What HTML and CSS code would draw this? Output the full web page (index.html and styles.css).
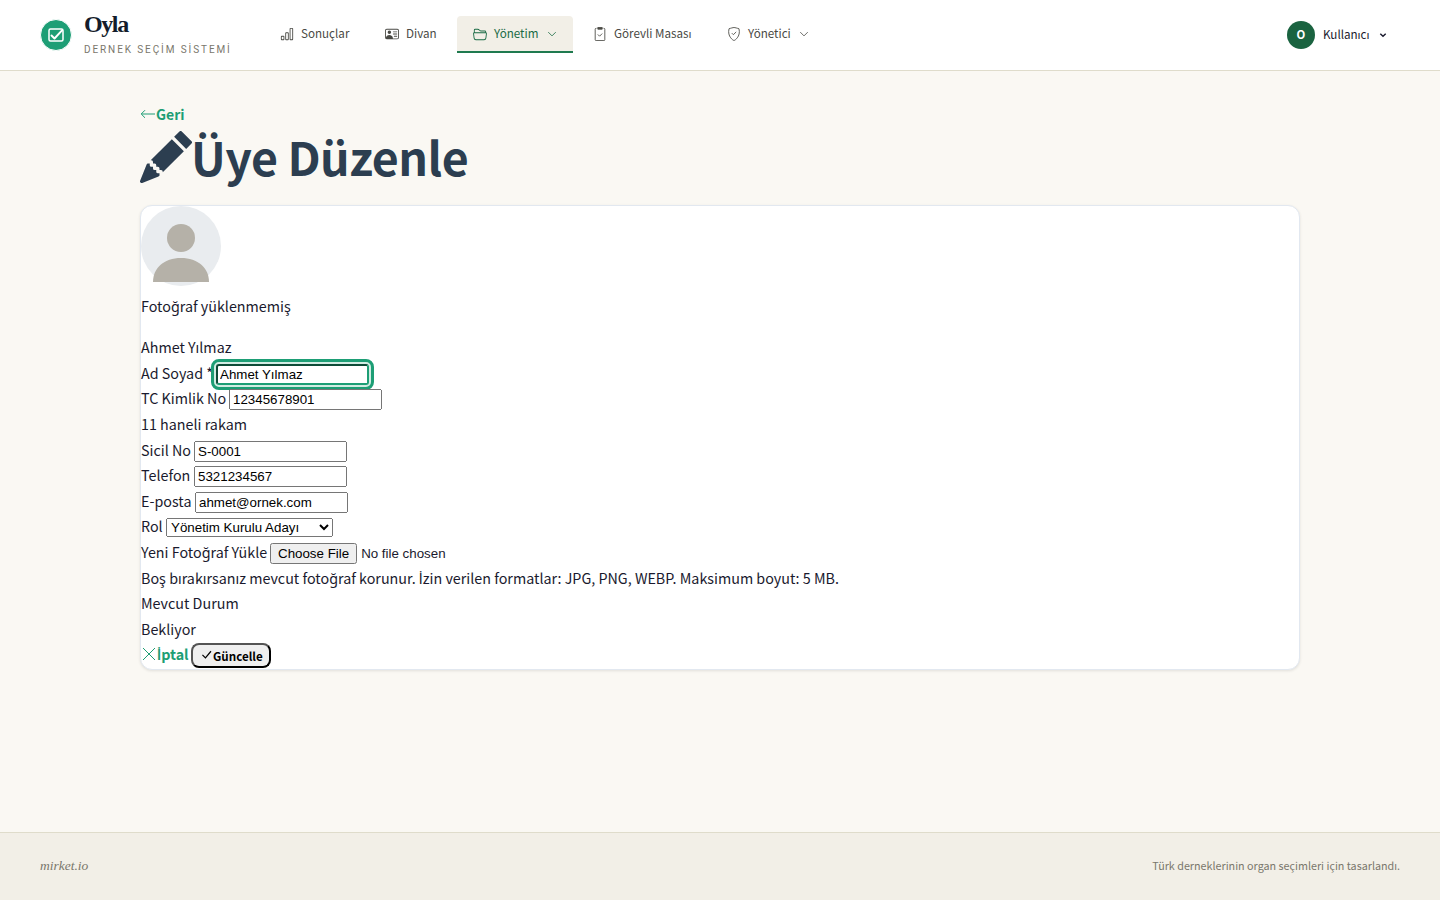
FILE: index.html
```html
<!DOCTYPE html>
<html lang="tr">
<head>
<meta charset="UTF-8" />
<meta name="viewport" content="width=device-width, initial-scale=1.0" />
<title>Üye Düzenle - Oyla</title>
<link rel="stylesheet" href="styles.css">
</head>
<body>
<header class="topbar">
  <a class="brand" href="#">
    <span class="brand-mark">
      <svg width="18" height="18" viewBox="0 0 18 18" fill="none" stroke="#fff" stroke-width="1.5" stroke-linecap="round" stroke-linejoin="round">
        <rect x="2" y="3" width="14" height="12" rx="1.5"/>
        <path d="M4.5 9.5l3 3L15 4.3" stroke-width="1.9"/>
      </svg>
    </span>
    <span class="brand-text">
      <span class="brand-name">Oyla</span>
      <span class="brand-sub">DERNEK SEÇİM SİSTEMİ</span>
    </span>
  </a>
  <nav class="nav">
    <a class="nav-item w-sonuclar" href="#">
      <svg class="icon" viewBox="0 0 16 16"><path d="M4 11H2v3h2zm5-4H7v7h2zm5-5v12h-2V2zm-2-1a1 1 0 0 0-1 1v12a1 1 0 0 0 1 1h2a1 1 0 0 0 1-1V2a1 1 0 0 0-1-1zM6 7a1 1 0 0 1 1-1h2a1 1 0 0 1 1 1v7a1 1 0 0 1-1 1H7a1 1 0 0 1-1-1zm-5 4a1 1 0 0 1 1-1h2a1 1 0 0 1 1 1v3a1 1 0 0 1-1 1H2a1 1 0 0 1-1-1z"/></svg>
      <span>Sonuçlar</span>
    </a>
    <a class="nav-item w-divan" href="#">
      <svg class="icon" viewBox="0 0 16 16"><path d="M5 8a2 2 0 1 0 0-4 2 2 0 0 0 0 4m4-2.500a.5.5 0 0 1 .5-.5h4a.5.5 0 0 1 0 1h-4a.5.5 0 0 1-.5-.5M9 8a.5.5 0 0 1 .5-.5h4a.5.5 0 0 1 0 1h-4A.5.5 0 0 1 9 8m1 2.500a.5.5 0 0 1 .5-.5h3a.5.5 0 0 1 0 1h-3a.5.5 0 0 1-.5-.5"/><path d="M2 2a2 2 0 0 0-2 2v8a2 2 0 0 0 2 2h12a2 2 0 0 0 2-2V4a2 2 0 0 0-2-2zM1 4a1 1 0 0 1 1-1h12a1 1 0 0 1 1 1v8a1 1 0 0 1-1 1H8.960q.04-.245.04-.5C9 10.567 7.210 9 5 9c-2.086 0-3.800 1.398-3.984 3.181A1 1 0 0 1 1 12z"/></svg>
      <span>Divan</span>
    </a>
    <a class="nav-item w-yonetim active" href="#">
      <svg class="icon" viewBox="0 0 16 16"><path d="M1 3.500A1.500 1.500 0 0 1 2.500 2h2.764c.958 0 1.760.56 2.311 1.184C7.985 3.648 8.480 4 9 4h4.500A1.500 1.500 0 0 1 15 5.500v.64c.57.265.94.876.856 1.546l-.64 5.124A2.500 2.500 0 0 1 12.733 15H3.266a2.500 2.500 0 0 1-2.481-2.190l-.64-5.124A1.500 1.500 0 0 1 1 6.140zM2 6h12v-.5a.5.5 0 0 0-.5-.5H9c-.964 0-1.710-.629-2.174-1.154C6.374 3.334 5.820 3 5.264 3H2.500a.5.5 0 0 0-.5.5zm-.367 1a.5.5 0 0 0-.496.562l.64 5.124A1.500 1.500 0 0 0 3.266 14h9.468a1.500 1.500 0 0 0 1.489-1.314l.64-5.124A.5.5 0 0 0 14.367 7z"/></svg>
      <span>Yönetim</span>
      <svg class="chevron" viewBox="0 0 16 16"><path d="M2 5l6 6 6-6"/></svg>
    </a>
    <a class="nav-item w-gorevli" href="#">
      <svg class="icon line" viewBox="0 0 16 16"><path d="M4 1.500h-.5a1 1 0 0 0-1 1v12a1 1 0 0 0 1 1h9a1 1 0 0 0 1-1v-12a1 1 0 0 0-1-1H12M5.500 8.500L7.500 10.500l3-3"/><path class="solid" d="M5.500.5h5v2h-5z"/></svg>
      <span>Görevli Masası</span>
    </a>
    <a class="nav-item w-yonetici" href="#">
      <svg class="icon line" viewBox="0 0 16 16"><path d="M8 .6C6.900.6 4.200 1.400 2.300 2 1.200 6.500 2.400 10 4.200 12.300 5.400 13.900 7.200 15.400 8 15.400s2.600-1.500 3.800-3.100C13.600 10 14.800 6.500 13.700 2 11.800 1.400 9.100.6 8 .6zM5.500 7L7.300 8.800l3.200-3.200"/></svg>
      <span>Yönetici</span>
      <svg class="chevron" viewBox="0 0 16 16"><path d="M2 5l6 6 6-6"/></svg>
    </a>
  </nav>
  <div class="user">
    <span class="user-avatar">O</span>
    <span class="user-name">Kullanıcı</span>
    <svg class="user-caret" viewBox="0 0 8 8"><path d="M1.300 2.700L4 5.300l2.700-2.600"/></svg>
  </div>
</header>

<main class="container">
  <a class="link back" href="#">
    <svg width="16" height="16" viewBox="0 0 16 16"><path d="M15 8H1.500M5 4.200L1.200 8 5 11.800"/></svg><span>Geri</span>
  </a>
  <h1>
    <svg width="52" height="52" viewBox="0 0 16 16"><path d="M12.854.146a.5.5 0 0 0-.707 0L10.500 1.793 14.207 5.500l1.647-1.646a.5.5 0 0 0 0-.708zm.646 6.061L9.793 2.500 3.293 9H3.500a.5.5 0 0 1 .5.5v.5h.5a.5.5 0 0 1 .5.5v.5h.5a.5.5 0 0 1 .5.5v.5h.5a.5.5 0 0 1 .5.5v.207zm-7.468 7.468A.5.5 0 0 1 6 13.500V13h-.5a.5.5 0 0 1-.5-.5V12h-.5a.5.5 0 0 1-.5-.5V11h-.5a.5.5 0 0 1-.5-.5V10h-.5a.5.5 0 0 1-.175-.032l-.179.178a.5.5 0 0 0-.11.168l-2 5a.5.5 0 0 0 .65.65l5-2a.5.5 0 0 0 .168-.11z"/></svg><span>Üye Düzenle</span>
  </h1>

  <form class="card">
    <svg class="photo" width="80" height="80" viewBox="0 0 80 80">
      <circle cx="40" cy="40" r="40" fill="#e9ecef"/>
      <circle cx="40" cy="32" r="14" fill="#b5b1a8"/>
      <path d="M12 76c0-14 11-24 28-24s28 10 28 24z" fill="#b5b1a8"/>
    </svg>
    <p class="photo-note"><span>Fotoğraf yüklenmemiş</span></p>
    <div class="row"><span>Ahmet Yılmaz</span></div>
    <div class="row"><label for="ad" class="l-ad">Ad Soyad *</label><input id="ad" class="focused" type="text" value="Ahmet Yılmaz"></div>
    <div class="row"><label for="tc" class="l-tc">TC Kimlik No</label><input id="tc" type="text" value="12345678901"></div>
    <div class="row"><span>11 haneli rakam</span></div>
    <div class="row"><label for="sicil" class="l-sicil">Sicil No</label><input id="sicil" type="text" value="S-0001"></div>
    <div class="row"><label for="tel" class="l-tel">Telefon</label><input id="tel" type="text" value="5321234567"></div>
    <div class="row"><label for="mail" class="l-mail">E-posta</label><input id="mail" type="email" value="ahmet@ornek.com"></div>
    <div class="row"><label for="rol" class="l-rol">Rol</label><select id="rol"><option>Yönetim Kurulu Adayı</option></select></div>
    <div class="row"><label for="foto" class="l-foto">Yeni Fotoğraf Yükle</label><input id="foto" type="file"></div>
    <div class="row"><span class="hint">Boş bırakırsanız mevcut fotoğraf korunur. <span class="cap-i">İ</span>zin verilen formatlar: JPG, PNG, WEBP. Maksimum boyut: 5 MB.</span></div>
    <div class="row"><span>Mevcut Durum</span></div>
    <div class="row"><span>Bekliyor</span></div>
    <div class="row">
      <a class="link cancel" href="#"><svg width="16" height="16" viewBox="0 0 16 16"><path d="M2 2l12 12M14 2L2 14"/></svg><span><span class="cap-i">İ</span>ptal</span></a>
      <button class="btn" type="button"><svg width="13" height="13" viewBox="0 0 16 16"><path d="M3 8.500l3.700 3.700L13.500 4"/></svg><span>Güncelle</span></button>
    </div>
  </form>
</main>

<footer class="footer">
  <span class="footer-brand">mirket.io</span>
  <span class="footer-note">Türk derneklerinin organ seçimleri için tasarlandı.</span>
</footer>
</body>
</html>
```

FILE: styles.css
```css
* {
  box-sizing: border-box;
}
body {
  margin: 0;
  min-height: 100vh;
  display: flex;
  flex-direction: column;
  font-family: "Noto Sans CJK JP", "Noto Sans", sans-serif;
  font-size: 14.32px;
  line-height: 25.6px;
  color: #1a1a2e;
  background-color: #faf8f3;
}
a {
  text-decoration: none;
}
.topbar {
  height: 71px;
  padding: 0 53px 0 40px;
  display: flex;
  align-items: center;
  background-color: #fff;
  border-bottom: 1px solid #dfdccb;
}
.brand {
  width: 224px;
  display: flex;
  align-items: center;
  gap: 12px;
}
.brand-mark {
  width: 32px;
  height: 32px;
  border: 1px solid #fff;
  border-radius: 50%;
  background-color: #1d9e75;
  display: flex;
  align-items: center;
  justify-content: center;
}
.brand-text {
  display: flex;
  flex-direction: column;
}
.brand-name {
  font-family: "Liberation Serif", serif;
  font-size: 24px;
  font-weight: bold;
  line-height: 28px;
  letter-spacing: -1.4px;
  color: #141c2b;
}
.brand-sub {
  font-family: Roboto, sans-serif;
  font-size: 10px;
  line-height: 22px;
  letter-spacing: 1.9px;
  padding-top: 1px;
  white-space: nowrap;
  color: #7a776c;
}
.nav {
  display: flex;
  gap: 4px;
  margin-bottom: 2px;
}
.nav-item {
  height: 37px;
  padding: 0 16px;
  display: flex;
  align-items: center;
  font-size: 11.64px;
  white-space: nowrap;
  color: #4a4a45;
  border-bottom: 2px solid transparent;
  border-radius: 4px 4px 0 0;
}
.nav-item span {
  padding-top: 0.4px;
}
.nav-item.active {
  color: #1a6b45;
  background-color: #f2efe7;
  border-bottom-color: #1f7a4f;
}
.w-sonuclar { width: 101px; }
.w-divan { width: 84px; }
.w-yonetim { width: 116px; }
.w-gorevli { width: 130px; }
.w-yonetici { width: 114px; }
.icon {
  width: 14px;
  height: 14px;
  margin-top: 1px;
  margin-right: 7px;
  flex: none;
  fill: currentColor;
}
.icon.line {
  fill: none;
  stroke: currentColor;
}
.icon .solid {
  fill: currentColor;
}
.chevron {
  width: 10px;
  height: 10px;
  margin-top: 1px;
  margin-left: auto;
  fill: none;
  stroke: currentColor;
  stroke-width: 1.3;
}
.user {
  margin-left: auto;
  display: flex;
  align-items: center;
  font-size: 11.64px;
}
.user-avatar {
  width: 28px;
  height: 28px;
  margin-right: 8px;
  border-radius: 50%;
  background-color: #1a6340;
  color: #fff;
  font-size: 11.4px;
  font-weight: bold;
  line-height: 27px;
  text-align: center;
}
.user-name {
  width: 56px;
  padding-bottom: 3px;
}
.user-caret {
  width: 8px;
  height: 8px;
  fill: none;
  stroke: currentColor;
  stroke-width: 1.4;
}
.container {
  width: 1160px;
  margin: 0 auto;
  padding-top: 31px;
  flex: 1;
}
.link {
  display: flex;
  align-items: center;
  color: #1d9e75;
  font-weight: 600;
}
.link svg {
  fill: none;
  stroke: currentColor;
}
.back {
  height: 25.6px;
  font-size: 14px;
}
.back svg {
  margin-bottom: 2px;
}
h1 {
  height: 62px;
  margin: 0 0 15px;
  display: flex;
  align-items: center;
  font-size: 46.5px;
  line-height: 62px;
  letter-spacing: -0.55px;
  color: #2c3e50;
}
h1 svg {
  fill: currentColor;
  margin-bottom: 4px;
}
h1 span {
  margin-left: -1px;
  padding-bottom: 5px;
}
.card {
  height: 465px;
  background-color: #fff;
  border: 1px solid #e2e8f0;
  border-radius: 12px;
  box-shadow: 0 1px 3px rgba(0, 0, 0, 0.1);
}
.photo {
  display: block;
  margin-bottom: 7px;
}
.photo-note {
  margin: 0 0 17.1px;
}
.row {
  height: 25.6px;
  display: flex;
  align-items: center;
  white-space: nowrap;
}
.row > span,
.row > label,
.cancel > span {
  padding-bottom: 2px;
}
/* the CJK face misplaces the dot on this letter */
.cap-i {
  font-family: Roboto, sans-serif;
  line-height: 1;
}
.l-ad { width: 75px; }
.l-tc { width: 88px; }
.l-sicil { width: 53px; }
.l-tel { width: 53px; }
.l-mail { width: 54px; }
.l-rol { width: 25px; }
.l-foto { width: 129px; }
input,
select {
  font-family: "Liberation Sans", Arial, sans-serif;
  font-size: 13.333px;
}
input[type="text"],
input[type="email"] {
  width: 153px;
  height: 21px;
}
.row > input,
.row > select,
.row > .btn {
  margin: 1.4px 0 0;
}
select {
  width: 167px;
  height: 19px;
}
.focused {
  border: 2px inset #1d9e75;
  border-radius: 3px;
  outline: 3px solid #1d9e75;
  outline-offset: 2px;
  box-shadow: 0 0 0 3px #d2ece3;
}
.cancel {
  width: 50px;
}
.cancel svg {
  margin-bottom: 2px;
}
.btn {
  width: 80px;
  height: 25px;
  padding: 0 0 0 7px;
  display: flex;
  align-items: center;
  font-family: inherit;
  font-size: 11.6px;
  font-weight: 600;
  color: #000;
  background-color: #efefef;
  border: 2px outset #000;
  border-radius: 8px;
}
.btn svg {
  margin-bottom: 2px;
  fill: none;
  stroke: currentColor;
  stroke-width: 1.5;
}
.footer {
  height: 68px;
  padding: 0 40px 2px;
  display: flex;
  align-items: center;
  justify-content: space-between;
  background-color: #f2efe7;
  border-top: 1px solid #dfdccb;
  color: #7a776c;
}
.footer-brand {
  font-family: "Liberation Serif", serif;
  font-size: 13.5px;
  font-style: italic;
}
.footer-note {
  font-size: 10.75px;
}
```
